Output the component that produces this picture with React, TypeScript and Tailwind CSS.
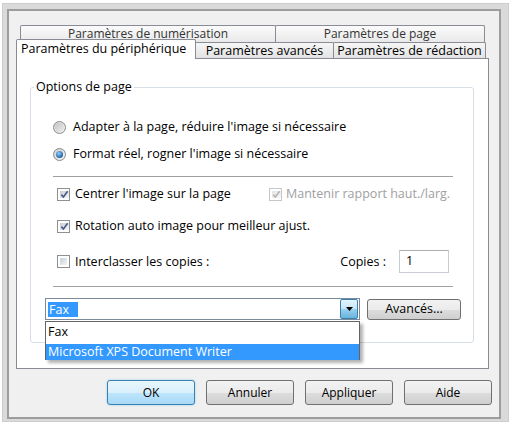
import React from "react";

function Radio({ checked }: { checked?: boolean }) {
  return (
    <span className="inline-flex w-[13px] h-[13px] shrink-0 items-center justify-center rounded-full border border-[#8a8a8a] bg-[linear-gradient(135deg,#cfcfcf,#f5f5f5)]">
      {checked ? (
        <span className="w-[7px] h-[7px] rounded-full bg-[radial-gradient(circle_at_40%_35%,#8fd0ff,#1d5a9a_75%)]" />
      ) : (
        <span className="w-[9px] h-[9px] rounded-full bg-[linear-gradient(135deg,#c4c4c4,#ececec)]" />
      )}
    </span>
  );
}

function Check({ checked, disabled }: { checked?: boolean; disabled?: boolean }) {
  return (
    <span
      className={
        disabled
          ? "inline-flex w-[13px] h-[13px] shrink-0 border border-[#c6c6c6] bg-white p-[2px]"
          : "inline-flex w-[13px] h-[13px] shrink-0 border border-[#8e8f8f] bg-white p-[2px]"
      }
    >
      <span
        className={
          disabled
            ? "flex flex-1 items-center justify-center bg-[linear-gradient(135deg,#e4e4e4,#f8f8f8)]"
            : "flex flex-1 items-center justify-center bg-[linear-gradient(135deg,#c9ced6,#f4f5f7)]"
        }
      >
        {checked && (
          <svg width="9" height="9" viewBox="0 0 9 9" className="overflow-visible">
            <path
              d="M1.3 4.6 L3.4 7 L7.6 1.2"
              fill="none"
              stroke={disabled ? "#b4b4b4" : "#4a5a85"}
              strokeWidth="1.6"
            />
          </svg>
        )}
      </span>
    </span>
  );
}

function Button({ label, primary }: { label: string; primary?: boolean }) {
  return (
    <div
      className={
        primary
          ? "flex w-[88px] h-[25px] items-center justify-center rounded-[3px] border border-[#3c7fb1] bg-[linear-gradient(#eaf6fd_0%,#d9f0fc_50%,#bee6fd_51%,#a7d9f5_100%)] shadow-[0_0_2px_#7ec8f0] text-black"
          : "flex w-[88px] h-[25px] items-center justify-center rounded-[3px] border border-[#707070] bg-[linear-gradient(#f2f2f2_0%,#ebebeb_50%,#dddddd_51%,#cfcfcf_100%)] text-black"
      }
    >
      {label}
    </div>
  );
}

export default function App() {
  return (
    <div className="w-[512px] h-[426px] bg-white pt-[3px] pl-[2px] pr-[3px] pb-[4px] font-['Open_Sans',sans-serif] text-[12px] leading-[16px] text-black">
      <div className="h-full border border-[#cdcdcd] bg-[#dadada] pt-[5px] pl-[4px] pr-[7px] pb-[2px]">
        <div className="h-full border-2 border-[#9d9d9d] bg-[#f0f0f0] flex flex-col pt-[14px] pl-[7px] pr-[6px]">
          {/* Tab row 1 */}
          <div className="flex h-[17px] pl-[4px]">
            <div className="w-[256px] h-[17px] border border-b-0 border-[#898c95] rounded-t-[2px] bg-[linear-gradient(#fbfbfb,#e9e9e9)] text-center text-[#333] leading-[16px]">
              Paramètres de numérisation
            </div>
            <div className="w-[210px] -ml-px h-[17px] border border-b-0 border-[#898c95] rounded-t-[2px] bg-[linear-gradient(#fbfbfb,#e9e9e9)] text-center text-[#333] leading-[16px]">
              Paramètres de page
            </div>
          </div>
          {/* Tab row 2 */}
          <div className="flex h-[16px] items-end relative z-10 text-[12.5px]">
            <div className="w-[180px] h-[20px] -mb-px border border-b-0 border-[#898c95] rounded-t-[2px] bg-white pl-[4px] leading-[18px]">
              Paramètres du périphérique
            </div>
            <div className="w-[139px] -ml-px h-[16px] border border-b-0 border-[#898c95] rounded-t-[2px] bg-[linear-gradient(#f6f6f6,#e3e3e3)] text-center leading-[15px]">
              Paramètres avancés
            </div>
            <div className="w-[153px] -ml-px h-[16px] border border-b-0 border-[#898c95] rounded-t-[2px] bg-[linear-gradient(#f6f6f6,#e3e3e3)] text-center leading-[15px]">
              Paramètres de rédaction
            </div>
          </div>
          {/* Panel */}
          <div className="w-[473px] h-[311px] border border-[#898c95] bg-white pt-[20px] text-[12.5px]">
            <fieldset className="ml-[13px] w-[444px] border border-[#d5dfe5] rounded-[3px] pb-[22px]">
              <legend className="ml-[3px] px-[2px] leading-[16px]">Options de page</legend>
              <div className="mt-[22px] ml-[22px] flex h-[20px] items-center gap-[7px]">
                <Radio />
                <span>Adapter à la page, réduire l'image si nécessaire</span>
              </div>
              <div className="mt-[7px] ml-[22px] flex h-[20px] items-center gap-[7px]">
                <Radio checked />
                <span>Format réel, rogner l'image si nécessaire</span>
              </div>
              <div className="mt-[12px] ml-[22px] w-[400px] h-[2px] border-t border-[#a0a0a0] border-b border-b-white" />
              <div className="mt-[6px] ml-[26px] flex h-[20px] items-center">
                <div className="flex w-[212px] items-center gap-[5px]">
                  <Check checked />
                  <span>Centrer l'image sur la page</span>
                </div>
                <div className="flex items-center gap-[4px] text-[#a0a0a0]">
                  <Check checked disabled />
                  <span>Mantenir rapport haut./larg.</span>
                </div>
              </div>
              <div className="mt-[12px] ml-[26px] flex h-[20px] items-center gap-[5px]">
                <Check checked />
                <span>Rotation auto image pour meilleur ajust.</span>
              </div>
              <div className="mt-[14px] ml-[26px] mr-[24px] flex h-[23px] items-center">
                <div className="flex items-center gap-[5px]">
                  <Check />
                  <span>Interclasser les copies :</span>
                </div>
                <span className="ml-auto mr-[13px]">Copies :</span>
                <div className="w-[50px] h-[23px] border border-[#c8ccd2] border-t-[#abadb3] bg-white pl-[6px] leading-[20px]">
                  1
                </div>
              </div>
              <div className="mt-[13px] ml-[22px] w-[400px] h-[2px] border-t border-[#a0a0a0] border-b border-b-white" />
              <div className="mt-[10px] ml-[14px] flex items-center gap-[7px]">
                <div className="relative w-[315px] h-[22px] border border-[#7a8a99] bg-white flex items-center pl-[2px] pr-[1px]">
                  <span className="bg-[#3399ff] text-white px-px leading-[15px] w-[30px]">Fax</span>
                  <div className="ml-auto w-[18px] h-[20px] rounded-[2px] border border-[#3c7fb1] bg-[linear-gradient(#e5f4fc,#c4e5f6_50%,#98d1ef_51%,#68b3db)] flex items-center justify-center">
                    <svg width="7" height="4" viewBox="0 0 7 4">
                      <path d="M0 0 H7 L3.5 4 Z" fill="#000" />
                    </svg>
                  </div>
                  <div className="absolute left-[-1px] top-[22px] w-[315px] h-[39px] border border-[#646464] bg-white shadow-[3px_3px_3px_rgba(0,0,0,0.3)] z-20 pt-[2px]">
                    <div className="h-[16px] pl-[2px] leading-[16px]">Fax</div>
                    <div className="mt-[4px] h-[16px] bg-[#3399ff] text-white pl-[2px] leading-[16px]">
                      Microsoft XPS Document Writer
                    </div>
                  </div>
                </div>
                <div className="flex w-[94px] h-[21px] items-center justify-center rounded-[3px] border border-[#707070] bg-[linear-gradient(#f2f2f2_0%,#ebebeb_50%,#dddddd_51%,#cfcfcf_100%)]">
                  Avancés...
                </div>
              </div>
            </fieldset>
          </div>
          {/* Buttons */}
          <div className="mt-[11px] flex justify-end gap-[11px] pr-[1px]">
            <Button label="OK" primary />
            <Button label="Annuler" />
            <Button label="Appliquer" />
            <Button label="Aide" />
          </div>
        </div>
      </div>
    </div>
  );
}
